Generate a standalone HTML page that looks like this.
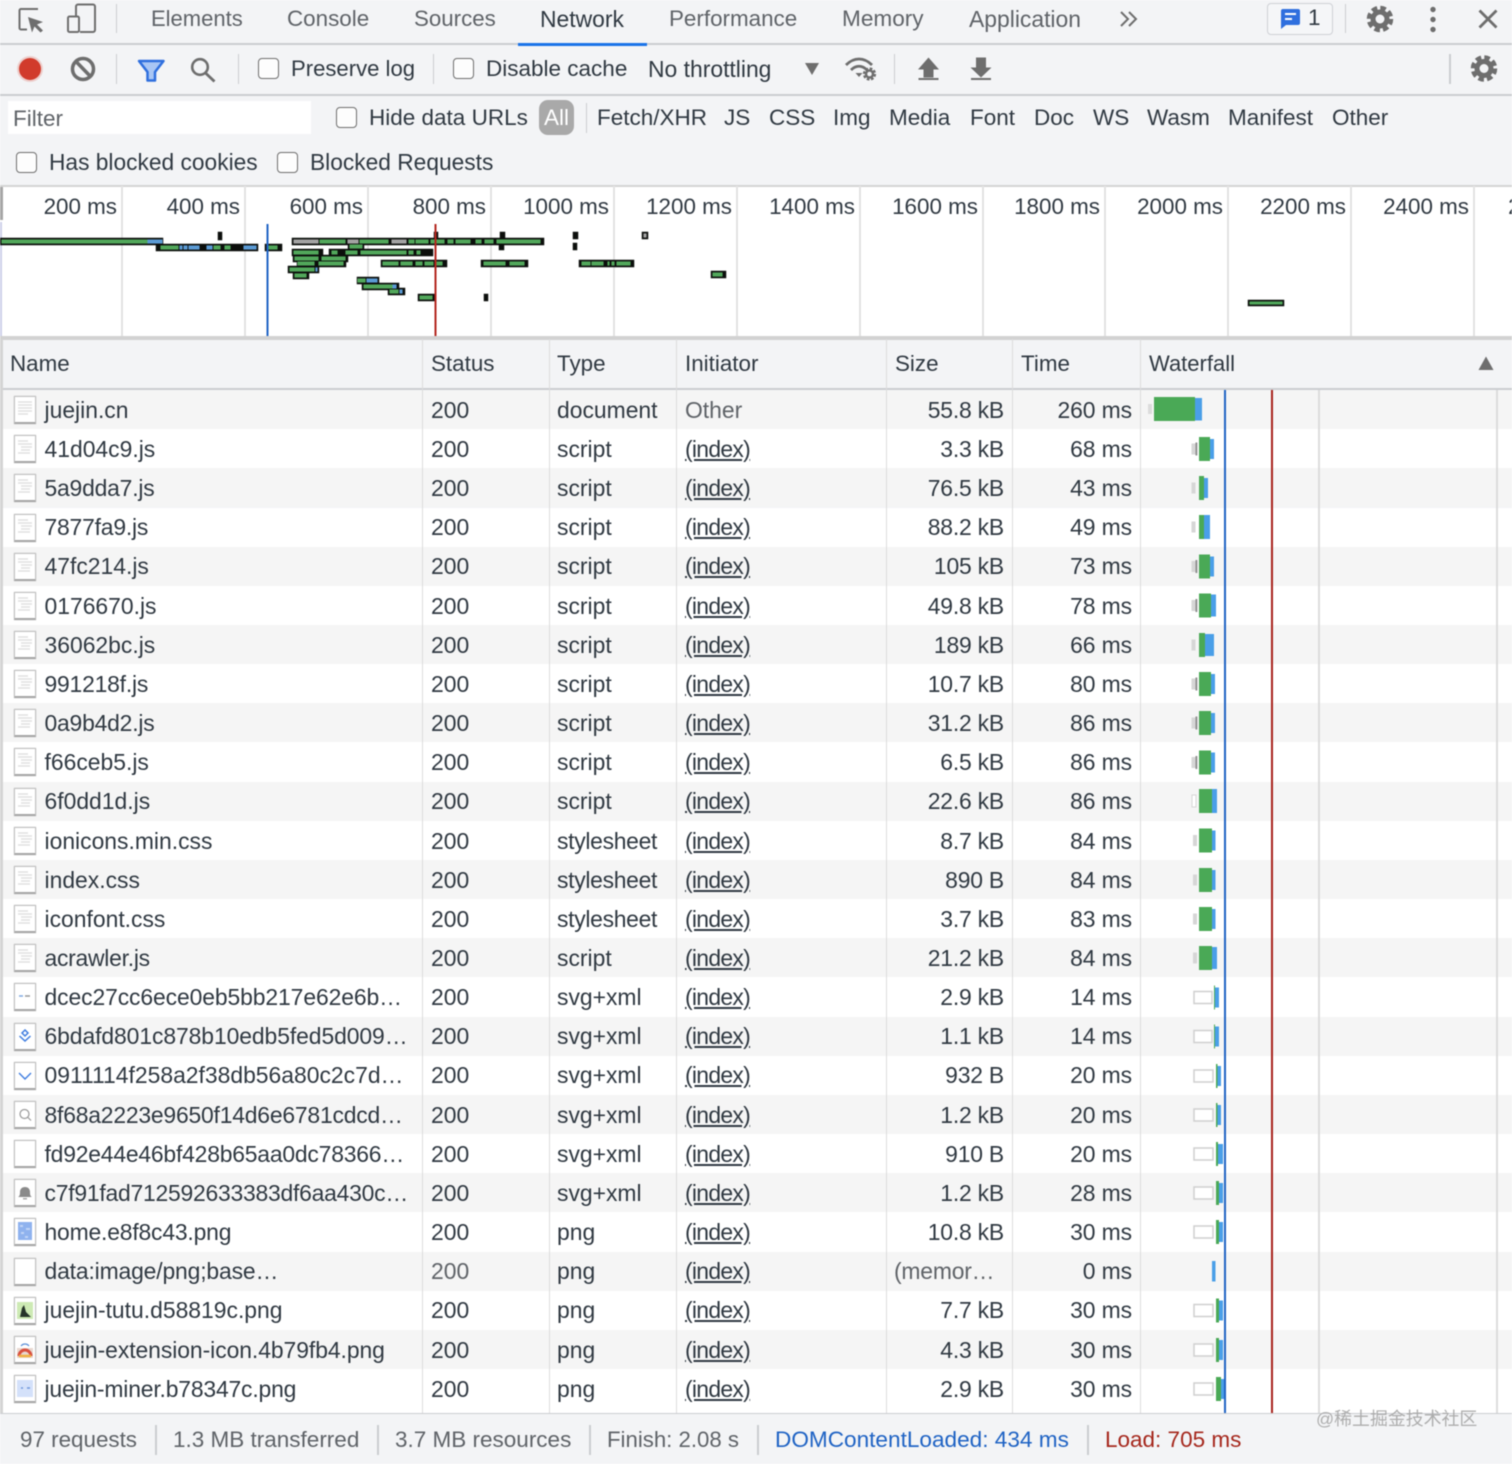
<!DOCTYPE html>
<html lang="en"><head><meta charset="utf-8"><title>Network</title>
<style>
html,body{margin:0;padding:0;width:1512px;height:1464px;overflow:hidden;background:#fff}
#w{position:absolute;left:0;top:0;width:1512px;height:1464px;overflow:hidden;background:#f3f4f6;font-family:"Liberation Sans","Noto Sans CJK SC",sans-serif;font-size:22.5px;color:#303942;filter:blur(.4px)}
.t{position:absolute;white-space:nowrap;line-height:30px}
.g{color:#5f6368}
.b{position:absolute;background:#cbcdd1}
.cb{position:absolute;width:19px;height:19px;border:1.5px solid #6e6e6e;border-radius:4px;background:#fdfdfd}
.l{position:absolute;top:186px;height:150px;width:2px;background:#e3e3e3}
.ol{position:absolute;top:196px;line-height:24px;white-space:nowrap;text-align:right;width:110px;font-size:22.4px}
.r{position:absolute;left:2px;width:1510px;height:39.2px;line-height:39.2px;background:#fff;white-space:nowrap;font-size:22.9px}
.s{background:#f5f5f5}
.r span{position:absolute;top:.8px}
.r .n{left:42.5px}.r .st{left:429px}.r .ty{left:555px}.r .in{left:683px}
.r .u{text-decoration:underline;letter-spacing:-.7px}
.r .sz{right:508px;letter-spacing:-.2px}.r .tm{right:380px;letter-spacing:-.1px}
.sh{letter-spacing:-.3px}
.i{position:absolute;left:11.5px;top:6px;width:20px;height:25px;background:#fff;border:1.5px solid #c0c0c0;border-bottom:2.5px solid #a6a6a6;box-shadow:0 0 1px #bbb}
.i svg{position:absolute;left:0;top:0;width:20px;height:25px}
.c{position:absolute;top:339px;height:1075px;width:1.5px;background:#dcdcdc}
.p{fill:#6e6e6e}
.h{font-size:22.4px}
</style></head><body><div id="w">

<!-- top toolbars -->
<div class="b" style="left:0;top:43px;width:1512px;height:2px"></div>
<div class="b" style="left:0;top:94px;width:1512px;height:2px"></div>
<div class="b" style="left:518px;top:43px;width:129px;height:2.5px;background:#1a73e8"></div>
<div class="b" style="left:115.500px;top:4px;width:1.5px;height:29px"></div>
<div class="b" style="left:1344.500px;top:4px;width:1.5px;height:29px"></div>
<div class="b" style="left:115.500px;top:54px;width:1.5px;height:30px"></div>
<div class="b" style="left:237.500px;top:54px;width:1.5px;height:30px"></div>
<div class="b" style="left:432.500px;top:54px;width:1.5px;height:30px"></div>
<div class="b" style="left:893.500px;top:54px;width:1.5px;height:30px"></div>
<div class="b" style="left:1449px;top:54px;width:1.5px;height:30px"></div>
<div class="b" style="left:585.500px;top:103px;width:1.5px;height:30px"></div>

<div class="t g" style="left:151px;top:4px;font-size:22px">Elements</div>
<div class="t g" style="left:287px;top:4px;font-size:22.4px">Console</div>
<div class="t g" style="left:414px;top:4px;font-size:22.3px">Sources</div>
<div class="t" style="left:540px;top:4px;font-size:22.9px">Network</div>
<div class="t g" style="left:669px;top:4px;font-size:22.4px">Performance</div>
<div class="t g" style="left:842px;top:4px;font-size:22.6px">Memory</div>
<div class="t g" style="left:969px;top:4px;font-size:22.9px">Application</div>

<div style="position:absolute;left:1267px;top:3px;width:64px;height:30px;border:1.5px solid #cfd1d5;border-radius:4px;background:#f5f6f8"></div>
<div class="t" style="left:1308px;top:3px">1</div>

<div class="cb" style="left:258px;top:58px"></div>
<div class="t" style="left:291px;top:53.5px;font-size:22.1px">Preserve log</div>
<div class="cb" style="left:453px;top:58px"></div>
<div class="t" style="left:486px;top:53.5px;font-size:22.5px">Disable cache</div>
<div class="t" style="left:648px;top:53.5px;font-size:22.9px">No throttling</div>

<div style="position:absolute;left:8px;top:101px;width:303px;height:33px;background:#fff"></div>
<div class="t g" style="left:13px;top:104px;font-size:22.5px">Filter</div>
<div class="cb" style="left:336px;top:107px"></div>
<div class="t" style="left:369px;top:102.5px">Hide data URLs</div>
<div style="position:absolute;left:539px;top:100px;width:35px;height:35px;border-radius:9px;background:#a9a9a9"></div>
<div class="t" style="left:544px;top:102.5px;color:#fff">All</div>
<div class="t" style="left:597px;top:102.5px">Fetch/XHR</div>
<div class="t" style="left:724px;top:102.5px">JS</div>
<div class="t" style="left:769px;top:102.5px">CSS</div>
<div class="t" style="left:833px;top:102.5px">Img</div>
<div class="t" style="left:889px;top:102.5px">Media</div>
<div class="t" style="left:970px;top:102.5px">Font</div>
<div class="t" style="left:1034px;top:102.5px">Doc</div>
<div class="t" style="left:1093px;top:102.5px">WS</div>
<div class="t" style="left:1147px;top:102.5px">Wasm</div>
<div class="t" style="left:1228px;top:102.5px">Manifest</div>
<div class="t" style="left:1332px;top:102.5px">Other</div>
<div class="cb" style="left:16px;top:152px"></div>
<div class="t" style="left:49px;top:147px;font-size:22.75px">Has blocked cookies</div>
<div class="cb" style="left:277px;top:152px"></div>
<div class="t" style="left:310px;top:147px;font-size:22.75px">Blocked Requests</div>

<!-- overview -->
<div style="position:absolute;left:0;top:185px;width:1512px;height:151px;background:#fff;border-top:2px solid #d4d4d4;box-sizing:border-box;overflow:hidden">
</div>
<div style="position:absolute;left:0;top:336px;width:1512px;height:4px;background:#d2d2d2"></div>
<div class="l" style="left:121px"></div><div class="l" style="left:244px"></div><div class="l" style="left:367px"></div><div class="l" style="left:490px"></div><div class="l" style="left:613px"></div><div class="l" style="left:736px"></div><div class="l" style="left:859px"></div><div class="l" style="left:982px"></div><div class="l" style="left:1104px"></div><div class="l" style="left:1227px"></div><div class="l" style="left:1350px"></div><div class="l" style="left:1473px"></div>
<div style="position:absolute;left:0;top:187px;width:3px;height:33px;background:#a6a6a6"></div>
<div style="position:absolute;left:0;top:222px;width:2px;height:114px;background:#cdd0ea"></div>
<div style="position:absolute;left:0;top:186px;width:1512px;height:40px;overflow:hidden">
<div class="ol" style="left:7px;top:9px">200 ms</div><div class="ol" style="left:130px;top:9px">400 ms</div><div class="ol" style="left:253px;top:9px">600 ms</div><div class="ol" style="left:376px;top:9px">800 ms</div><div class="ol" style="left:499px;top:9px">1000 ms</div><div class="ol" style="left:622px;top:9px">1200 ms</div><div class="ol" style="left:745px;top:9px">1400 ms</div><div class="ol" style="left:868px;top:9px">1600 ms</div><div class="ol" style="left:990px;top:9px">1800 ms</div><div class="ol" style="left:1113px;top:9px">2000 ms</div><div class="ol" style="left:1236px;top:9px">2200 ms</div><div class="ol" style="left:1359px;top:9px">2400 ms</div><div class="ol" style="left:1484px;top:9px">2600 ms</div>
</div>

<svg width="1512" height="340" style="position:absolute;left:0;top:0">
<g fill="#0c0f0c" stroke="#0c0f0c" stroke-width=".5">
<rect x="0" y="238" width="163" height="7"/><rect x="156" y="244" width="102" height="7"/><rect x="265" y="244" width="17" height="7"/><rect x="218" y="232" width="4" height="8"/>
<rect x="292" y="238" width="252" height="7"/><rect x="348" y="243" width="16" height="7"/><rect x="292" y="249" width="31" height="7"/><rect x="329" y="249" width="104" height="7"/><rect x="293" y="255" width="55" height="7"/><rect x="297" y="260" width="49" height="7"/><rect x="381" y="260" width="66" height="7"/><rect x="288" y="266" width="31" height="7"/><rect x="293" y="272" width="16" height="7"/><rect x="357" y="277" width="22" height="7"/><rect x="362" y="283" width="37" height="7"/><rect x="388" y="288" width="17" height="7"/><rect x="418" y="294" width="17" height="7"/>
<rect x="434" y="232" width="4" height="6"/><rect x="500" y="232" width="5" height="6"/><rect x="573" y="232" width="5" height="7"/><rect x="642" y="232" width="6" height="7"/><rect x="499" y="243" width="5" height="7"/><rect x="573" y="243" width="4" height="7"/>
<rect x="481" y="260" width="47" height="7"/><rect x="579" y="260" width="55" height="7"/><rect x="711" y="271" width="15" height="7"/><rect x="484" y="294" width="4" height="7"/><rect x="1248" y="300" width="36" height="6"/>
</g>
<g fill="#52a85b" stroke="#52a85b" stroke-width="1.100">
<rect x="2" y="240" width="145" height="3"/><rect x="161" y="246" width="17" height="3"/><rect x="214" y="246" width="6" height="3"/><rect x="225" y="246" width="5" height="3"/><rect x="268" y="246" width="9" height="3"/>
<rect x="320" y="240" width="25" height="3"/><rect x="360" y="240" width="28" height="3"/><rect x="409" y="240" width="5" height="3"/><rect x="416" y="240" width="12" height="3"/><rect x="431" y="240" width="13" height="3"/><rect x="448" y="240" width="5" height="3"/><rect x="456" y="240" width="14" height="3"/><rect x="476" y="240" width="5" height="3"/><rect x="485" y="240" width="8" height="3"/><rect x="497" y="240" width="43" height="3"/>
<rect x="350" y="245" width="12" height="3"/><rect x="294" y="251" width="24" height="3"/><rect x="332" y="251" width="5" height="3"/><rect x="346" y="251" width="11" height="3"/><rect x="361" y="251" width="45" height="3"/><rect x="409" y="251" width="4" height="3"/><rect x="417" y="251" width="3" height="3"/>
<rect x="295" y="257" width="23" height="3"/><rect x="322" y="257" width="23" height="3"/><rect x="298" y="262" width="16" height="3"/><rect x="319" y="262" width="24" height="3"/><rect x="383" y="262" width="15" height="3"/><rect x="401" y="262" width="11" height="3"/><rect x="416" y="262" width="6" height="3"/><rect x="425" y="262" width="8" height="3"/><rect x="437" y="262" width="5" height="3"/>
<rect x="290" y="268" width="24" height="3"/><rect x="295" y="274" width="11" height="3"/><rect x="358" y="279" width="7" height="3"/><rect x="364" y="285" width="28" height="3"/><rect x="390" y="290" width="8" height="3"/><rect x="420" y="296" width="12" height="3"/>
<rect x="484" y="262" width="21" height="3"/><rect x="510" y="262" width="14" height="3"/><rect x="582" y="262" width="8" height="3"/><rect x="592" y="262" width="11" height="3"/><rect x="608" y="262" width="1" height="3"/><rect x="612" y="262" width="2" height="3"/><rect x="617" y="262" width="13" height="3"/><rect x="713" y="273" width="9" height="3"/><rect x="1250" y="302" width="32" height="2"/>
</g>
<g fill="#5b9bd5" stroke="#5b9bd5" stroke-width="1.100">
<rect x="148" y="240" width="14" height="3"/><rect x="180" y="246" width="2" height="3"/><rect x="184" y="246" width="3" height="3"/><rect x="189" y="246" width="10" height="3"/><rect x="207" y="246" width="5" height="3"/><rect x="244" y="246" width="5" height="3"/><rect x="250" y="246" width="6" height="3"/><rect x="367" y="279" width="10" height="3"/><rect x="393" y="285" width="3" height="3"/><rect x="400" y="290" width="2" height="3"/><rect x="316" y="268" width="1" height="3"/>
</g>
<g fill="#a3a3a3" stroke="#a3a3a3" stroke-width="1.100">
<rect x="294" y="240" width="24" height="3"/><rect x="348" y="240" width="10" height="3"/><rect x="392" y="240" width="14" height="3"/><rect x="644" y="234" width="2" height="3"/>
</g>
<rect x="266.5" y="224" width="2" height="112" fill="#1f63c4"/>
<rect x="434.5" y="224" width="2" height="112" fill="#b3261e"/>
</svg>

<!-- table header -->
<div style="position:absolute;left:0;top:340px;width:1512px;height:48px;background:#f3f4f6"></div>
<div class="b" style="left:0;top:388px;width:1512px;height:2px"></div>
<div class="t h" style="left:10px;top:348.500px">Name</div>
<div class="t h" style="left:431px;top:348.500px">Status</div>
<div class="t h" style="left:557px;top:348.500px">Type</div>
<div class="t h" style="left:685px;top:348.500px">Initiator</div>
<div class="t h" style="left:895px;top:348.500px">Size</div>
<div class="t h" style="left:1021px;top:348.500px">Time</div>
<div class="t h" style="left:1149px;top:348.500px;font-size:22px">Waterfall</div>

<!-- rows -->
<div class="r s" style="top:390px"><div class="i"><svg viewBox="0 0 20 25"><path d="M3 5h14M3 8h14M3 11h14M3 14h14M3 17h10" stroke="#e2e2e2" stroke-width="1.5"/></svg></div><span class="n">juejin.cn</span><span class="st">200</span><span class="ty">document</span><span class="in g">Other</span><span class="sz">55.8 kB</span><span class="tm">260 ms</span></div>
<div class="r" style="top:429.2px"><div class="i"><svg viewBox="0 0 20 25"><path d="M3 5h10M3 8h14M6 11h11M6 14h9M3 17h12" stroke="#e2e2e2" stroke-width="1.5"/></svg></div><span class="n">41d04c9.js</span><span class="st">200</span><span class="ty">script</span><span class="in u">(index)</span><span class="sz">3.3 kB</span><span class="tm">68 ms</span></div>
<div class="r s" style="top:468.3px"><div class="i"><svg viewBox="0 0 20 25"><path d="M3 5h10M3 8h14M6 11h11M6 14h9M3 17h12" stroke="#e2e2e2" stroke-width="1.5"/></svg></div><span class="n" style="letter-spacing:-.2px">5a9dda7.js</span><span class="st">200</span><span class="ty">script</span><span class="in u">(index)</span><span class="sz">76.5 kB</span><span class="tm">43 ms</span></div>
<div class="r" style="top:507.5px"><div class="i"><svg viewBox="0 0 20 25"><path d="M3 5h10M3 8h14M6 11h11M6 14h9M3 17h12" stroke="#e2e2e2" stroke-width="1.5"/></svg></div><span class="n" style="letter-spacing:-.2px">7877fa9.js</span><span class="st">200</span><span class="ty">script</span><span class="in u">(index)</span><span class="sz">88.2 kB</span><span class="tm">49 ms</span></div>
<div class="r s" style="top:546.6px"><div class="i"><svg viewBox="0 0 20 25"><path d="M3 5h10M3 8h14M6 11h11M6 14h9M3 17h12" stroke="#e2e2e2" stroke-width="1.5"/></svg></div><span class="n">47fc214.js</span><span class="st">200</span><span class="ty">script</span><span class="in u">(index)</span><span class="sz">105 kB</span><span class="tm">73 ms</span></div>
<div class="r" style="top:585.8px"><div class="i"><svg viewBox="0 0 20 25"><path d="M3 5h10M3 8h14M6 11h11M6 14h9M3 17h12" stroke="#e2e2e2" stroke-width="1.5"/></svg></div><span class="n">0176670.js</span><span class="st">200</span><span class="ty">script</span><span class="in u">(index)</span><span class="sz">49.8 kB</span><span class="tm">78 ms</span></div>
<div class="r s" style="top:625px"><div class="i"><svg viewBox="0 0 20 25"><path d="M3 5h10M3 8h14M6 11h11M6 14h9M3 17h12" stroke="#e2e2e2" stroke-width="1.5"/></svg></div><span class="n">36062bc.js</span><span class="st">200</span><span class="ty">script</span><span class="in u">(index)</span><span class="sz">189 kB</span><span class="tm">66 ms</span></div>
<div class="r" style="top:664.1px"><div class="i"><svg viewBox="0 0 20 25"><path d="M3 5h10M3 8h14M6 11h11M6 14h9M3 17h12" stroke="#e2e2e2" stroke-width="1.5"/></svg></div><span class="n" style="letter-spacing:-.2px">991218f.js</span><span class="st">200</span><span class="ty">script</span><span class="in u">(index)</span><span class="sz">10.7 kB</span><span class="tm">80 ms</span></div>
<div class="r s" style="top:703.3px"><div class="i"><svg viewBox="0 0 20 25"><path d="M3 5h10M3 8h14M6 11h11M6 14h9M3 17h12" stroke="#e2e2e2" stroke-width="1.5"/></svg></div><span class="n" style="letter-spacing:-.2px">0a9b4d2.js</span><span class="st">200</span><span class="ty">script</span><span class="in u">(index)</span><span class="sz">31.2 kB</span><span class="tm">86 ms</span></div>
<div class="r" style="top:742.4px"><div class="i"><svg viewBox="0 0 20 25"><path d="M3 5h10M3 8h14M6 11h11M6 14h9M3 17h12" stroke="#e2e2e2" stroke-width="1.5"/></svg></div><span class="n">f66ceb5.js</span><span class="st">200</span><span class="ty">script</span><span class="in u">(index)</span><span class="sz">6.5 kB</span><span class="tm">86 ms</span></div>
<div class="r s" style="top:781.6px"><div class="i"><svg viewBox="0 0 20 25"><path d="M3 5h10M3 8h14M6 11h11M6 14h9M3 17h12" stroke="#e2e2e2" stroke-width="1.5"/></svg></div><span class="n">6f0dd1d.js</span><span class="st">200</span><span class="ty">script</span><span class="in u">(index)</span><span class="sz">22.6 kB</span><span class="tm">86 ms</span></div>
<div class="r" style="top:820.8px"><div class="i"><svg viewBox="0 0 20 25"><path d="M3 5h10M3 8h14M6 11h11M6 14h9M3 17h12" stroke="#e2e2e2" stroke-width="1.5"/></svg></div><span class="n">ionicons.min.css</span><span class="st">200</span><span class="ty sh">stylesheet</span><span class="in u">(index)</span><span class="sz">8.7 kB</span><span class="tm">84 ms</span></div>
<div class="r s" style="top:859.9px"><div class="i"><svg viewBox="0 0 20 25"><path d="M3 5h10M3 8h14M6 11h11M6 14h9M3 17h12" stroke="#e2e2e2" stroke-width="1.5"/></svg></div><span class="n">index.css</span><span class="st">200</span><span class="ty sh">stylesheet</span><span class="in u">(index)</span><span class="sz">890 B</span><span class="tm">84 ms</span></div>
<div class="r" style="top:899.1px"><div class="i"><svg viewBox="0 0 20 25"><path d="M3 5h10M3 8h14M6 11h11M6 14h9M3 17h12" stroke="#e2e2e2" stroke-width="1.5"/></svg></div><span class="n">iconfont.css</span><span class="st">200</span><span class="ty sh">stylesheet</span><span class="in u">(index)</span><span class="sz">3.7 kB</span><span class="tm">83 ms</span></div>
<div class="r s" style="top:938.2px"><div class="i"><svg viewBox="0 0 20 25"><path d="M3 5h10M3 8h14M6 11h11M6 14h9M3 17h12" stroke="#e2e2e2" stroke-width="1.5"/></svg></div><span class="n" style="letter-spacing:-.25px">acrawler.js</span><span class="st">200</span><span class="ty">script</span><span class="in u">(index)</span><span class="sz">21.2 kB</span><span class="tm">84 ms</span></div>
<div class="r" style="top:977.4px"><div class="i"><svg viewBox="0 0 20 25"><path d="M4 12h4" stroke="#7fa8e0" stroke-width="1.5"/><path d="M10 12h5" stroke="#999" stroke-width="1.5"/></svg></div><span class="n" style="letter-spacing:-.1px">dcec27cc6ece0eb5bb217e62e6b…</span><span class="st">200</span><span class="ty">svg+xml</span><span class="in u">(index)</span><span class="sz">2.9 kB</span><span class="tm">14 ms</span></div>
<div class="r s" style="top:1016.6px"><div class="i"><svg viewBox="0 0 20 25"><path d="M10 6l3 3-3 3-3-3zM4.500 12l5.500 5 5.500-5" stroke="#3f7de0" stroke-width="1.500" fill="none"/></svg></div><span class="n" style="letter-spacing:-.08px">6bdafd801c878b10edb5fed5d009…</span><span class="st">200</span><span class="ty">svg+xml</span><span class="in u">(index)</span><span class="sz">1.1 kB</span><span class="tm">14 ms</span></div>
<div class="r" style="top:1055.7px"><div class="i"><svg viewBox="0 0 20 25"><path d="M4 10l6 6 6-6" stroke="#3f7de0" stroke-width="1.400" fill="none"/></svg></div><span class="n">0911114f258a2f38db56a80c2c7d…</span><span class="st">200</span><span class="ty">svg+xml</span><span class="in u">(index)</span><span class="sz">932 B</span><span class="tm">20 ms</span></div>
<div class="r s" style="top:1094.9px"><div class="i"><svg viewBox="0 0 20 25"><circle cx="9.500" cy="12" r="4.500" stroke="#999" stroke-width="1.200" fill="none"/><path d="M13 15.500l3 3" stroke="#999" stroke-width="1.200"/></svg></div><span class="n" style="letter-spacing:-.2px">8f68a2223e9650f14d6e6781cdcd…</span><span class="st">200</span><span class="ty">svg+xml</span><span class="in u">(index)</span><span class="sz">1.2 kB</span><span class="tm">20 ms</span></div>
<div class="r" style="top:1134px"><div class="i"></div><span class="n" style="letter-spacing:-.2px">fd92e44e46bf428b65aa0dc78366…</span><span class="st">200</span><span class="ty">svg+xml</span><span class="in u">(index)</span><span class="sz">910 B</span><span class="tm">20 ms</span></div>
<div class="r s" style="top:1173.2px"><div class="i"><svg viewBox="0 0 20 25"><path d="M3 17c2-1 2-3 2-5 0-3 2-5 5-5s5 2 5 5c0 2 0 4 2 5z" fill="#8a8a8a"/><rect x="8" y="18" width="4" height="1.500" fill="#aaa"/></svg></div><span class="n" style="letter-spacing:-.23px">c7f91fad712592633383df6aa430c…</span><span class="st">200</span><span class="ty">svg+xml</span><span class="in u">(index)</span><span class="sz">1.2 kB</span><span class="tm">28 ms</span></div>
<div class="r" style="top:1212.4px"><div class="i"><svg viewBox="0 0 20 25"><rect x="3" y="3" width="14" height="18" fill="#8fb2ee"/><path d="M5 7h3M11 10h4M6 14h3M10 18h3" stroke="#c0d4f6" stroke-width="2"/></svg></div><span class="n" style="letter-spacing:-.18px">home.e8f8c43.png</span><span class="st">200</span><span class="ty">png</span><span class="in u">(index)</span><span class="sz">10.8 kB</span><span class="tm">30 ms</span></div>
<div class="r s" style="top:1251.5px"><div class="i"></div><span class="n" style="letter-spacing:-.15px">data:image/png;base…</span><span class="st g">200</span><span class="ty">png</span><span class="in u">(index)</span><span class="sz g" style="right:auto;left:892px">(memor…</span><span class="tm">0 ms</span></div>
<div class="r" style="top:1290.7px"><div class="i"><svg viewBox="0 0 20 25"><rect x="2" y="4" width="16" height="17" fill="#cdeab4"/><path d="M5 19l2-9 2-3 2 7 5 5z" fill="#26342a"/></svg></div><span class="n">juejin-tutu.d58819c.png</span><span class="st">200</span><span class="ty">png</span><span class="in u">(index)</span><span class="sz">7.7 kB</span><span class="tm">30 ms</span></div>
<div class="r s" style="top:1329.8px"><div class="i"><svg viewBox="0 0 20 25"><rect x="2" y="11" width="16" height="10" fill="#e8d8d0"/><path d="M4 19a6 6 0 0 1 12 0" stroke="#d9503f" stroke-width="3" fill="none"/><path d="M4 19h12" stroke="#f0b040" stroke-width="2.500"/><path d="M6 9a5 5 0 0 1 8 0" stroke="#5a8fd8" stroke-width="1.200" fill="none"/></svg></div><span class="n" style="letter-spacing:-.06px">juejin-extension-icon.4b79fb4.png</span><span class="st">200</span><span class="ty">png</span><span class="in u">(index)</span><span class="sz">4.3 kB</span><span class="tm">30 ms</span></div>
<div class="r" style="top:1369px;height:45px"><div class="i"><svg viewBox="0 0 20 25"><rect x="2" y="4" width="16" height="17" fill="#d4e1fa"/><path d="M6 12h2M12 12h3" stroke="#6d96dc" stroke-width="1.500"/></svg></div><span class="n" style="letter-spacing:-.17px">juejin-miner.b78347c.png</span><span class="st">200</span><span class="ty">png</span><span class="in u">(index)</span><span class="sz">2.9 kB</span><span class="tm">30 ms</span></div>

<!-- column lines -->
<div class="c" style="left:421.500px"></div><div class="c" style="left:548.500px"></div><div class="c" style="left:675.500px"></div><div class="c" style="left:885.500px"></div><div class="c" style="left:1011.500px"></div><div class="c" style="left:1139.500px"></div>
<div class="c" style="left:1318px;top:390px;height:1024px"></div><div class="c" style="left:1496px;top:390px;height:1024px"></div>
<div style="position:absolute;left:0;top:339px;width:2.500px;height:1075px;background:#d4d4d4"></div>
<div style="position:absolute;left:1224px;top:390px;width:2px;height:1024px;background:#1f63c4"></div>
<div style="position:absolute;left:1270.500px;top:390px;width:2px;height:1024px;background:#a8231c"></div>

<!-- waterfall and toolbar icons -->
<svg width="1512" height="1464" style="position:absolute;left:0;top:0">
<defs>
<g id="gear"><circle r="9.500" fill="#6e6e6e"/><circle r="11" fill="none" stroke="#6e6e6e" stroke-width="4.500" stroke-dasharray="5.500 3.140"/><circle r="4.500" fill="#f3f4f6"/></g>
<g id="s1"><rect x="1191.500" y="-5.500" width="4" height="11" fill="#d6d6d6"/></g>
<g id="s2"><rect x="1191.500" y="-5.500" width="4" height="11" fill="#d6d6d6"/><rect x="1195.500" y="-6.500" width="1.800" height="13" fill="#8c8c8c"/></g>
<rect id="bx" x="1194" y="-6" width="19" height="12" fill="#fff" stroke="#cfcfcf" stroke-width="1.500"/>
</defs>

<rect x="1148" y="404" width="4" height="10" fill="#dcdcdc"/><rect x="1154" y="397" width="41" height="24" fill="#4aa956"/><rect x="1195" y="398" width="7" height="22.500" fill="#4a9fe8"/>

<g fill="#4aa956">
<g transform="translate(0,449)"><use href="#s2"/><rect x="1199" y="-12" width="11" height="24"/><rect x="1210" y="-10" width="4" height="20" fill="#4a9fe8"/></g>
<g transform="translate(0,488)"><use href="#s1"/><rect x="1199" y="-12" width="5" height="24"/><rect x="1204" y="-10" width="4" height="20" fill="#4a9fe8"/></g>
<g transform="translate(0,527)"><use href="#s1"/><rect x="1199" y="-12" width="5" height="24"/><rect x="1204" y="-12" width="6" height="24" fill="#4a9fe8"/></g>
<g transform="translate(0,566.500)"><use href="#s2"/><rect x="1199" y="-12" width="11" height="24"/><rect x="1210" y="-10" width="4" height="20" fill="#4a9fe8"/></g>
<g transform="translate(0,605.500)"><use href="#s2"/><rect x="1199" y="-12" width="12" height="24"/><rect x="1211" y="-11" width="5" height="22" fill="#4a9fe8"/></g>
<g transform="translate(0,645)"><use href="#s1"/><rect x="1199" y="-12" width="6" height="24"/><rect x="1205" y="-11" width="9" height="22" fill="#4a9fe8"/></g>
<g transform="translate(0,684)"><use href="#s2"/><rect x="1199" y="-12" width="12" height="24"/><rect x="1211" y="-10" width="4" height="20" fill="#4a9fe8"/></g>
<g transform="translate(0,723)"><use href="#s2"/><rect x="1199" y="-12" width="12" height="24"/><rect x="1211" y="-10" width="4" height="20" fill="#4a9fe8"/></g>
<g transform="translate(0,762.500)"><use href="#s2"/><rect x="1199" y="-12" width="12" height="24"/><rect x="1211" y="-10" width="4" height="20" fill="#4a9fe8"/></g>
<g transform="translate(0,801)"><rect x="1192" y="-6" width="4" height="12" fill="#fff" stroke="#d6d6d6" stroke-width="1"/><rect x="1199" y="-12" width="13" height="24"/><rect x="1212" y="-12" width="5" height="24" fill="#4a9fe8"/></g>
<g transform="translate(0,840.500)"><rect x="1193" y="-5.500" width="4" height="11" fill="#d6d6d6"/><rect x="1199" y="-12" width="13" height="24"/><rect x="1212" y="-10" width="3.500" height="20" fill="#4a9fe8"/></g>
<g transform="translate(0,880)"><rect x="1193" y="-5.500" width="4" height="11" fill="#d6d6d6"/><rect x="1199" y="-12" width="13" height="24"/><rect x="1212" y="-10" width="3.500" height="20" fill="#4a9fe8"/></g>
<g transform="translate(0,919)"><rect x="1193" y="-5.500" width="4" height="11" fill="#d6d6d6"/><rect x="1199" y="-12" width="13" height="24"/><rect x="1212" y="-10" width="3.500" height="20" fill="#4a9fe8"/></g>
<g transform="translate(0,958)"><rect x="1193" y="-5.500" width="4" height="11" fill="#d6d6d6"/><rect x="1199" y="-12" width="13" height="24"/><rect x="1212" y="-11" width="5" height="22" fill="#4a9fe8"/></g>
<g transform="translate(0,997.500)"><rect x="1194" y="-6" width="18" height="12" fill="#fff" stroke="#cfcfcf" stroke-width="1.500"/><rect x="1214" y="-12" width="1" height="24"/><rect x="1215" y="-10" width="4" height="20" fill="#4a9fe8"/></g>
<g transform="translate(0,1036.500)"><rect x="1194" y="-6" width="18" height="12" fill="#fff" stroke="#cfcfcf" stroke-width="1.500"/><rect x="1214" y="-12" width="1" height="24"/><rect x="1215" y="-10" width="4" height="20" fill="#4a9fe8"/></g>
<g transform="translate(0,1076)"><use href="#bx"/><rect x="1216" y="-12" width="1.500" height="24"/><rect x="1217.500" y="-10" width="3.500" height="20" fill="#4a9fe8"/></g>
<g transform="translate(0,1115)"><use href="#bx"/><rect x="1216" y="-12" width="1.500" height="24"/><rect x="1217.500" y="-10" width="3.500" height="20" fill="#4a9fe8"/></g>
<g transform="translate(0,1154)"><use href="#bx"/><rect x="1216" y="-12" width="2" height="24"/><rect x="1218" y="-10" width="5" height="20" fill="#4a9fe8"/></g>
<g transform="translate(0,1193)"><use href="#bx"/><rect x="1216" y="-12" width="3" height="24"/><rect x="1219" y="-10" width="4" height="20" fill="#4a9fe8"/></g>
<g transform="translate(0,1232)"><use href="#bx"/><rect x="1216" y="-12" width="3" height="24"/><rect x="1219" y="-10" width="4" height="20" fill="#4a9fe8"/></g>
<rect x="1212" y="1261" width="3.500" height="20.500" fill="#4a9fe8"/>
<g transform="translate(0,1310.500)"><use href="#bx"/><rect x="1216" y="-12" width="3" height="24"/><rect x="1219" y="-10" width="4" height="20" fill="#4a9fe8"/></g>
<g transform="translate(0,1350)"><use href="#bx"/><rect x="1216" y="-12" width="3" height="24"/><rect x="1219" y="-10" width="4" height="20" fill="#4a9fe8"/></g>
<g transform="translate(0,1389)"><use href="#bx"/><rect x="1216" y="-12" width="5" height="24"/><rect x="1221" y="-10" width="3" height="20" fill="#4a9fe8"/></g>
</g>

<!-- inspect -->
<path d="M38 9H21a1.500 1.500 0 0 0-1.500 1.500V28A1.500 1.500 0 0 0 21 29.500H27" fill="none" stroke="#6e6e6e" stroke-width="2"/>
<path d="M28 17l15 5-6 2.500 6 6-2.500 2-6-6-2.500 6z" class="p"/>
<!-- device -->
<path d="M76 16V6.500A2 2 0 0 1 78 4.500h15A2 2 0 0 1 95 6.500V30a2 2 0 0 1-2 2H80" fill="none" stroke="#6e6e6e" stroke-width="2"/>
<rect x="68" y="16.500" width="11" height="15.500" rx="1.500" fill="none" stroke="#6e6e6e" stroke-width="2"/>
<!-- >> -->
<path d="M1121 12l7 7-7 7M1129 12l7 7-7 7" fill="none" stroke="#6e6e6e" stroke-width="2"/>
<!-- issue badge icon -->
<path d="M1283 9h15a2 2 0 0 1 2 2v12a2 2 0 0 1-2 2h-12l-5 4V11a2 2 0 0 1 2-2z" fill="#2f6fde"/>
<path d="M1285 14h11M1285 19h7" stroke="#fff" stroke-width="2"/>
<use href="#gear" transform="translate(1380,19)"/>
<circle cx="1433" cy="9.500" r="2.700" class="p"/><circle cx="1433" cy="19.500" r="2.700" class="p"/><circle cx="1433" cy="29.500" r="2.700" class="p"/>
<path d="M1479.500 10.500l17 17M1496.500 10.500l-17 17" stroke="#6e6e6e" stroke-width="2.800"/>
<!-- record -->
<circle cx="30" cy="69" r="13" fill="#e8a9a3" opacity=".5"/>
<circle cx="30" cy="69" r="11" fill="#d13b2c"/>
<!-- clear -->
<circle cx="83" cy="69" r="10.500" fill="none" stroke="#6e6e6e" stroke-width="3.500"/>
<path d="M76 61.500l14.500 15" stroke="#6e6e6e" stroke-width="3.500"/>
<!-- funnel -->
<path d="M139 61h24.500l-8.500 11v8.500h-7.500V72z" fill="#a9c6f4" stroke="#2f6fde" stroke-width="2.500" stroke-linejoin="round"/>
<!-- search -->
<circle cx="200" cy="67" r="7.800" fill="none" stroke="#6e6e6e" stroke-width="2.600"/>
<path d="M205.500 73l9 8.500" stroke="#6e6e6e" stroke-width="2.800"/>
<!-- throttle arrow -->
<path d="M805 63h14l-7 12z" class="p"/>
<!-- wifi -->
<path d="M846 65c8-8 18-8 26 0M851 70c5-5 11-5 16 0" fill="none" stroke="#6e6e6e" stroke-width="2.800"/>
<path d="M855.500 73h7l-3.500 4z" class="p"/>
<g transform="translate(869.500,74) scale(.5)"><use href="#gear"/></g>
<!-- up / down -->
<path d="M928.500 57.500l10.500 12H933.500v8h-10v-8h-5.500z" class="p"/><rect x="918.500" y="78" width="20" height="2" class="p"/>
<path d="M976 57.500h10v10h5.500L981 77.500 970.500 67.500h5.500z" class="p"/><rect x="971" y="78" width="20" height="2" class="p"/>
<use href="#gear" transform="translate(1484,68.500)"/>
<!-- sort -->
<path d="M1486 356.500l7.500 13.500h-15z" class="p"/>
</svg>

<!-- footer -->
<div style="position:absolute;left:0;top:1413px;width:1512px;height:51px;background:#f3f4f6;border-top:1.500px solid #cbcdd1;box-sizing:border-box"></div>
<div class="b" style="left:155px;top:1425px;width:1.500px;height:30px"></div>
<div class="b" style="left:377px;top:1425px;width:1.500px;height:30px"></div>
<div class="b" style="left:589px;top:1425px;width:1.500px;height:30px"></div>
<div class="b" style="left:757px;top:1425px;width:1.500px;height:30px"></div>
<div class="b" style="left:1087px;top:1425px;width:1.500px;height:30px"></div>
<div class="t g" style="left:20px;top:1424.5px;font-size:22.4px">97 requests</div>
<div class="t g" style="left:173px;top:1424.5px">1.3 MB transferred</div>
<div class="t g" style="left:395px;top:1424.5px">3.7 MB resources</div>
<div class="t g" style="left:607px;top:1424.5px;font-size:22.2px">Finish: 2.08 s</div>
<div class="t" style="left:775px;top:1424.5px;color:#1f63c4;font-size:22.6px">DOMContentLoaded: 434 ms</div>
<div class="t" style="left:1105px;top:1424.5px;color:#a5271c">Load: 705 ms</div>
<div class="t" style="left:1316px;top:1404px;font-size:17.9px;color:#a6a6a6;opacity:.9">@稀土掘金技术社区</div>
</div></body></html>
